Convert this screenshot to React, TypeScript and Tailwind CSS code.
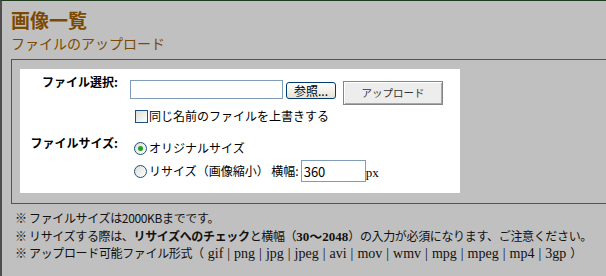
export default function App() {
  return (
    <div className="h-[276px] w-full overflow-hidden border-t border-l-2 border-t-[#1f3a1c] border-l-[#4e4e4e] bg-[#c0c0c0] font-['Noto_Sans_CJK_JP',sans-serif] text-black">
      <div className="pl-[9px]">
        <h1 className="mt-[7px] text-[19px] font-bold leading-[24px] text-[#7b4a00]">画像一覧</h1>
        <h2 className="mt-[2px] text-[14px] leading-[18px] text-[#7b4a00]">ファイルのアップロード</h2>

        <div className="mt-[7px] border-y border-l border-[#46661c] pt-[9px] pb-[10px] pl-[8px]">
          <div className="h-[124px] w-[440px] bg-white pt-[5px] text-[12px] leading-[16px]">
            {/* file select */}
            <div className="flex">
              <div className="w-[110px] shrink-0 pr-[12px] text-right font-bold">ファイル選択:</div>
              <div className="flex flex-col pt-[6px]">
                <div className="flex items-start">
                  <div className="h-[19px] w-[153px] border border-[#7f9db9] bg-white" />
                  <div className="mt-[2px] ml-[3px] flex h-[17px] w-[50px] items-center justify-center rounded-[3px] border border-[#003c74] bg-gradient-to-b from-white to-[#e6e3d6] text-[12px] leading-none">
                    参照...
                  </div>
                  <div className="mt-[1px] ml-[7px] flex h-[24px] w-[100px] items-center justify-center border border-[#858585] bg-[#ededed] text-[10.5px] leading-none text-[#333] shadow-[inset_1px_1px_0_#fff,inset_-1px_-1px_0_#a8a8a8]">
                    アップロード
                  </div>
                </div>
                <div className="mt-[3px] flex h-[16px] items-center">
                  <span className="ml-[5px] h-[13px] w-[13px] border border-[#1c5180] bg-gradient-to-br from-[#dcdcd7] to-white" />
                  <span className="ml-[1px]">同じ名前のファイルを上書きする</span>
                </div>
              </div>
            </div>

            {/* file size */}
            <div className="mt-[11px] flex">
              <div className="w-[110px] shrink-0 pr-[12px] text-right font-bold">ファイルサイズ:</div>
              <div className="flex flex-col pt-[5px]">
                <div className="flex h-[16px] items-center">
                  <Radio checked />
                  <span className="ml-[2px]">オリジナルサイズ</span>
                </div>
                <div className="mt-[4px] flex h-[22px] items-center">
                  <Radio />
                  <span className="ml-[2px]">リサイズ（画像縮小） 横幅:</span>
                  <div className="ml-[2px] flex h-[22px] w-[65px] items-center border border-[#7f9db9] bg-white pl-[2px] text-[13px] leading-none">
                    360
                  </div>
                  <span className="mt-[4px] font-['Liberation_Serif',serif] text-[13px]">px</span>
                </div>
              </div>
            </div>
          </div>
        </div>

        <div className="mt-[5px] ml-[4px] text-[12px] leading-[17.5px] tracking-[-0.35px] whitespace-nowrap text-[#111]">
          <p className="h-[17.5px]">※ ファイルサイズは2000KBまでです。</p>
          <p className="h-[17.5px]">
            ※ リサイズする際は、<b>リサイズへのチェック</b>と横幅（<b className="font-['Liberation_Serif','Noto_Sans_CJK_JP',serif] text-[13px] leading-none tracking-normal">30〜2048</b>）の入力が必須になります、ご注意ください。
          </p>
          <p className="h-[17.5px]">
            ※ アップロード可能ファイル形式（<span className="font-['Liberation_Serif',serif] text-[14px] leading-none tracking-normal [word-spacing:0.5px]">{" "}gif | png | jpg | jpeg | avi | mov | wmv | mpg | mpeg | mp4 | 3gp{" "}</span>）
          </p>
        </div>
      </div>
    </div>
  );
}

function Radio({ checked = false }: { checked?: boolean }) {
  return (
    <span className="ml-[4px] flex h-[13px] w-[13px] shrink-0 items-center justify-center rounded-full border border-[#1c5180] bg-gradient-to-br from-[#dcdcd7] to-white">
      {checked && <span className="h-[5px] w-[5px] rounded-full bg-[#21a121]" />}
    </span>
  );
}
